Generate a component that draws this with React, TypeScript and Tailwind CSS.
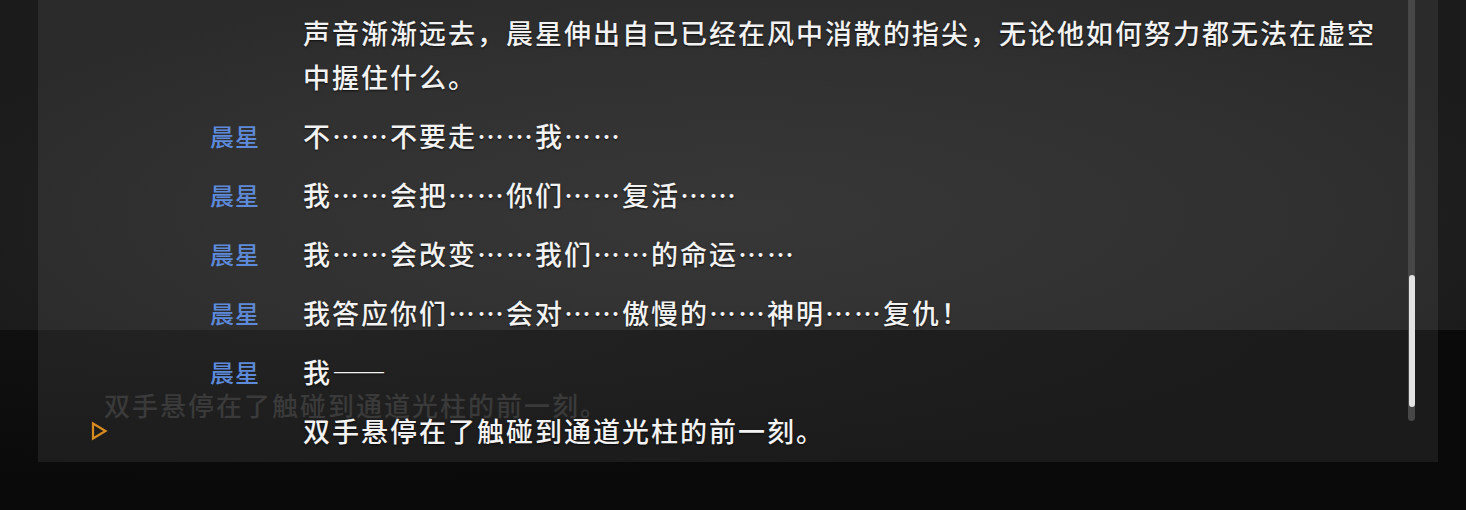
import React from 'react';

type Line = {
  name?: string;
  text: string;
  current?: boolean;
};

const backlog: Line[] = [
  {
    text: '声音渐渐远去，晨星伸出自己已经在风中消散的指尖，无论他如何努力都无法在虚空中握住什么。',
  },
  { name: '晨星', text: '不……不要走……我……' },
  { name: '晨星', text: '我……会把……你们……复活……' },
  { name: '晨星', text: '我……会改变……我们……的命运……' },
  { name: '晨星', text: '我答应你们……会对……傲慢的……神明……复仇！' },
  { name: '晨星', text: '我——' },
  { text: '双手悬停在了触碰到通道光柱的前一刻。', current: true },
];

const CurrentMarker: React.FC = () => (
  <svg width="18" height="20" viewBox="0 0 18 20" className="ml-[52px] shrink-0">
    <path d="M3 2.5 L15.5 10 L3 17.5 Z" fill="none" stroke="#d98a1f" strokeWidth="2.2" strokeLinejoin="miter" />
  </svg>
);

const App: React.FC = () => {
  return (
    <div
      lang="zh-CN"
      className="relative h-[510px] w-full overflow-hidden bg-[#0a0a0a] font-['Noto_Sans_CJK_SC',sans-serif]"
    >
      {/* scene behind the log */}
      <div className="h-[330px] bg-[radial-gradient(ellipse_at_50%_65%,#282828_0%,#232323_40%,#1b1b1b_80%)]" />

      {/* dialogue box text, dimmed under the log */}
      <div className="h-[180px] bg-[radial-gradient(ellipse_at_20%_0%,#121212_0%,#0a0a0a_60%)] pl-[104px] pt-[53px]">
        <p className="text-[26px] font-medium leading-[44px] tracking-[2px] text-[#2b2b2b]">
          双手悬停在了触碰到通道光柱的前一刻。
        </p>
      </div>

      {/* backlog panel */}
      <div className="absolute left-[38px] top-0 flex h-[462px] w-[1400px] bg-white/[0.07]">
        <div className="flex flex-1 flex-col gap-[15px] pt-[11px]">
          {backlog.map((line, i) => (
            <div key={i} className="flex items-start">
              <div className="flex h-[44px] w-[222px] shrink-0 items-center">
                {line.current && <CurrentMarker />}
                {line.name && (
                  <span className="ml-auto text-[24px] font-medium tracking-[1px] text-[#5d8ada]">{line.name}</span>
                )}
              </div>
              <p className="ml-[43px] w-[1090px] text-[27px] font-medium leading-[44px] tracking-[2px] text-[#f2f2f2] [text-shadow:0_1px_2px_rgba(0,0,0,0.7)]">
                {line.text}
              </p>
            </div>
          ))}
        </div>

        {/* scrollbar */}
        <div className="mr-[23px] w-[7px] shrink-0">
          <div className="-mt-[8px] h-[429px] rounded-full bg-[#474747] pt-[283px]">
            <div className="mx-auto h-[132px] w-[6px] rounded-full bg-[#e2e2e2]" />
          </div>
        </div>
      </div>
    </div>
  );
};

export default App;
